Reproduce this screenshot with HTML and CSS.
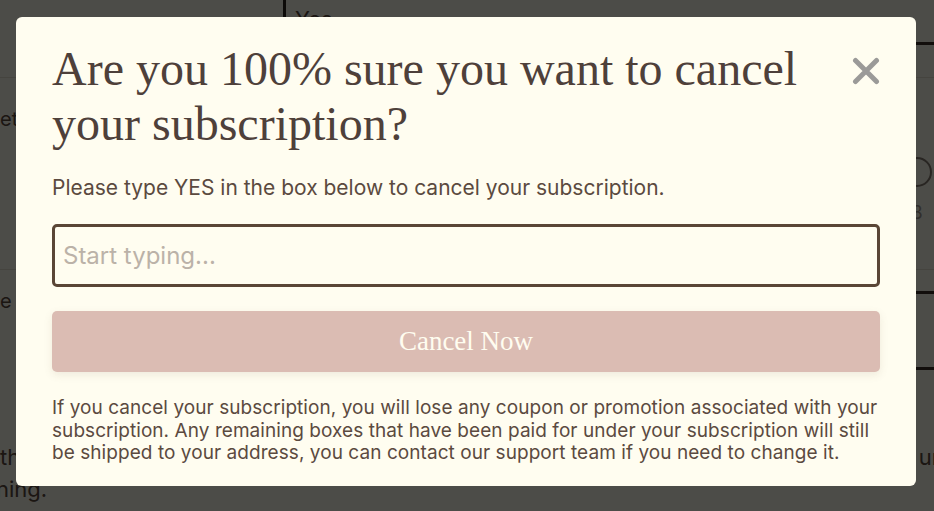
FILE: index.html
```html
<!DOCTYPE html>
<html lang="en">
<head>
<meta charset="utf-8">
<title>Cancel subscription</title>
<link rel="stylesheet" href="styles.css">
</head>
<body>
<div class="page">
  <div class="page-row row-top">
    <div class="yes-field">Yes</div>
  </div>
  <div class="page-row row-thin"></div>
  <div class="page-row row-mid">
    <span class="page-text">et</span>
    <div class="radio-group">
      <span class="radio"></span>
      <span class="page-num">8</span>
    </div>
  </div>
  <div class="page-row row-low">
    <span class="page-text page-text-e">e</span>
    <div class="dark-box"></div>
  </div>
  <p class="page-para"><span>th</span><span>ur</span></p>
  <p class="page-para page-para-2">ning.</p>
</div>

<div class="overlay">
  <div class="modal" role="dialog" aria-labelledby="modal-title">
    <div class="modal-head">
      <h1 id="modal-title" class="modal-title">Are you 100% sure you want to cancel your subscription?</h1>
      <button class="close-btn" aria-label="Close">
        <svg width="28" height="28" viewBox="0 0 28 28"><path d="M3.5 3.5 L24.5 24.5 M24.5 3.5 L3.5 24.5" stroke="#9b9a98" stroke-width="5" stroke-linecap="round"/></svg>
      </button>
    </div>
    <p class="modal-sub">Please type YES in the box below to cancel your subscription.</p>
    <input class="confirm-input" type="text" placeholder="Start typing...">
    <button class="cancel-btn">Cancel Now</button>
    <p class="modal-note">If you cancel your subscription, you will lose any coupon or promotion associated with your subscription. Any remaining boxes that have been paid for under your subscription will still be shipped to your address, you can contact our support team if you need to change it.</p>
  </div>
</div>
</body>
</html>
```

FILE: styles.css
```css
* { box-sizing: border-box; }
html, body { margin: 0; padding: 0; }
body {
  width: 934px;
  height: 511px;
  overflow: hidden;
  background: #fffdf0;
  font-family: Inter, "Noto Sans", sans-serif;
  color: #5b4a3f;
}

/* background page (dimmed by the overlay) */
.page { width: 934px; }
.page-row { display: flex; justify-content: space-between; align-items: flex-start; }
.row-top { height: 45px; }
.yes-field {
  flex: 1;
  margin-left: 283px;
  height: 45px;
  border-left: 3px solid #2a221d;
  border-bottom: 3px solid #3d302a;
  padding: 4px 0 0 9px;
  font-size: 22px;
  line-height: 30px;
  color: #5b4a3f;
  overflow: hidden;
}
.row-thin { height: 33px; border-bottom: 1px solid #e8e4d4; }
.row-mid { height: 192px; border-bottom: 1px solid #e8e4d4; }
.page-text { font-size: 20px; line-height: 24px; margin-top: 29px; color: #5b4a3f; }
.radio-group { display: flex; flex-direction: column; align-items: center; margin-top: 79px; margin-right: 2px; width: 30px; }
.radio {
  width: 30px; height: 30px;
  border: 2px solid #857d72;
  border-radius: 50%;
}
.page-num { font-size: 18px; line-height: 24px; color: #a39b90; margin-top: 14px; }
.row-low { height: 100px; }
.page-text-e { margin-top: 19px; }
.dark-box {
  width: 334px;
  height: 79px;
  margin-top: 21px;
  border-top: 3px solid #3d302a;
  border-bottom: 3px solid #3d302a;
}
.page-para {
  margin: 71px 0 0;
  font-size: 22px;
  line-height: 32px;
  display: flex;
  justify-content: space-between;
  margin-right: -6px;
}
.page-para-2 { margin-top: 0; margin-left: -4px; }

/* overlay + modal */
.overlay {
  position: fixed;
  inset: 0;
  background: rgba(0, 0, 0, 0.7);
  padding: 17px 18px 0 16px;
}
.modal {
  width: 900px;
  height: 469px;
  background: #fffdf0;
  border-radius: 6px;
  padding: 24px 36px 0 36px;
}
.modal-head { display: flex; justify-content: space-between; align-items: flex-start; }
.modal-title {
  margin: 0;
  font-family: "Liberation Serif", "Times New Roman", serif;
  font-weight: normal;
  font-size: 48px;
  line-height: 55px;
  color: #4e403a;
  width: 770px;
}
.close-btn {
  border: 0;
  background: none;
  padding: 0;
  margin-top: 16px;
  width: 28px;
  height: 28px;
  cursor: pointer;
}
.close-btn svg { display: block; }
.modal-sub {
  margin: 24px 0 0;
  font-size: 21px;
  line-height: 26px;
  color: #5b4a3f;
}
.confirm-input {
  display: block;
  width: 100%;
  height: 63px;
  margin-top: 23px;
  border: 3px solid #5a4636;
  border-radius: 5px;
  background: #fffdf0;
  padding: 0 8px;
  font-family: Inter, "Noto Sans", sans-serif;
  font-size: 24px;
  color: #5b4a3f;
  outline: none;
}
.confirm-input::placeholder { color: #bbb2a8; }
.cancel-btn {
  display: block;
  width: 100%;
  height: 61px;
  margin-top: 24px;
  border: 0;
  border-radius: 5px;
  background: #dbbcb3;
  box-shadow: 0 3px 8px rgba(120, 100, 80, 0.12);
  font-family: "Liberation Serif", "Times New Roman", serif;
  font-size: 27px;
  color: #fffdf0;
}
.modal-note {
  margin: 25px 0 0;
  font-size: 19px;
  line-height: 22.5px;
  letter-spacing: 0.06px;
  color: #5b4a3f;
}
```
